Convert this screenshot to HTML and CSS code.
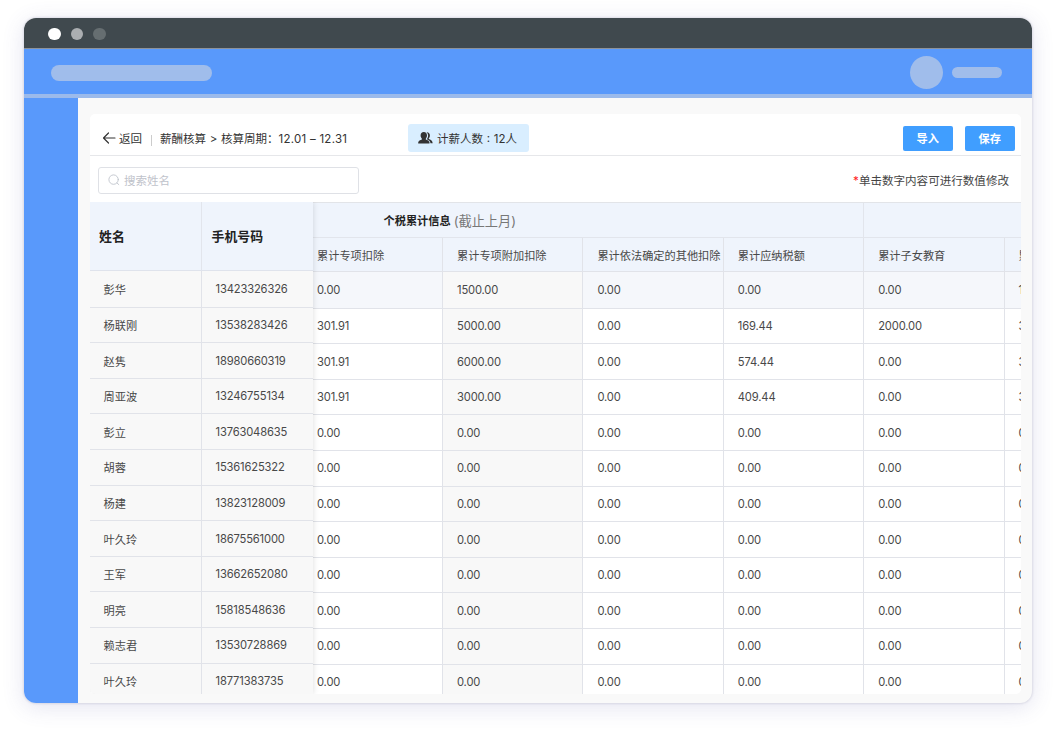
FILE: index.html
```html
<!DOCTYPE html>
<html lang="zh-CN">
<head>
    <meta charset="UTF-8">
    <meta name="viewport" content="width=device-width, initial-scale=1.0">
    <title>薪酬核算</title>
    <link rel="stylesheet" href="styles.css">
</head>
<body>
    <div class="window">
        <div class="titlebar">
            <span class="dot"></span>
            <span class="dot dot-mid"></span>
            <span class="dot dot-dim"></span>
        </div>
        <div class="topbar">
            <span class="logo-bar"></span>
            <span class="avatar"></span>
            <span class="user-bar"></span>
        </div>
        <div class="main">
            <div class="sidebar"></div>
            <div class="content">
                <div class="card">
                    <div class="card-head">
                        <svg class="back-icon" viewBox="0 0 14 12" fill="none" stroke="#333" stroke-width="1.2" stroke-linecap="round" stroke-linejoin="round"><path d="M13 6H1.500M6.500 1L1.500 6l5 5"/></svg>
                        <span class="back">返回</span>
                        <span class="divider"></span>
                        <span class="crumb">薪酬核算 <span class="arrow">&gt;</span> 核算周期：<span class="period">12.01 – 12.31</span></span>
                        <div class="count">
                            <svg class="people-icon" viewBox="0 0 15 12" fill="#333"><path d="M5.800 0C7.900 0 9 1.500 9 3.500c0 1.400-.6 2.500-1.200 3.200v.8c1.500.6 3.700 1.200 3.700 3.100V11.500H.2v-.9c0-1.900 2.200-2.500 3.700-3.100v-.8C3.200 6 2.600 4.900 2.600 3.500 2.600 1.500 3.700 0 5.800 0z"/><path d="M8.800.2c2 0 3.100 1.300 3.100 3.200 0 1.200-.5 2.200-1.100 2.900v.8c1.600.6 3.700 1.600 3.900 4.200h-2.200c-.2-2.200-1.800-3-3.400-3.700V6.800c.6-.8 1-1.800 1-3.200C10.100 2.200 9.600 1 8.500.2z"/></svg>
                            <span>计薪人数 : 12人</span>
                        </div>
                        <button class="btn btn-import">导入</button>
                        <button class="btn">保存</button>
                    </div>
                    <div class="toolbar">
                        <div class="search">
                            <svg class="search-icon" viewBox="0 0 12 12" fill="none" stroke="#c0c4cc" stroke-width="0.9" stroke-linecap="round"><circle cx="5.600" cy="5.600" r="4.700"/><path d="M9 9l1.800 1.600"/></svg>
                            <span>搜索姓名</span>
                        </div>
                        <div class="tip"><span class="star">*</span>单击数字内容可进行数值修改</div>
                    </div>
                    <div class="table">
                        <div class="fixed">
                            <div class="fixed-head"><div>姓名</div><div>手机号码</div></div>
                            <div class="row first"><div>彭华</div><div class="num">13423326326</div></div>
                            <div class="row"><div>杨联刚</div><div class="num">13538283426</div></div>
                            <div class="row"><div>赵隽</div><div class="num">18980660319</div></div>
                            <div class="row"><div>周亚波</div><div class="num">13246755134</div></div>
                            <div class="row"><div>彭立</div><div class="num">13763048635</div></div>
                            <div class="row"><div>胡蓉</div><div class="num">15361625322</div></div>
                            <div class="row"><div>杨建</div><div class="num">13823128009</div></div>
                            <div class="row"><div>叶久玲</div><div class="num">18675561000</div></div>
                            <div class="row"><div>王军</div><div class="num">13662652080</div></div>
                            <div class="row"><div>明亮</div><div class="num">15818548636</div></div>
                            <div class="row"><div>赖志君</div><div class="num">13530728869</div></div>
                            <div class="row"><div>叶久玲</div><div class="num">18771383735</div></div>
                        </div>
                        <div class="scroll">
                            <div class="group-head">
                                <div class="group"><b>个税累计信息</b> <span class="until">(截止上月)</span></div>
                            </div>
                            <div class="row sub-head"><div>累计专项扣除</div><div>累计专项附加扣除</div><div>累计依法确定的其他扣除</div><div>累计应纳税额</div><div>累计子女教育</div><div>累</div></div>
                            <div class="row num first"><div>0.00</div><div>1500.00</div><div>0.00</div><div>0.00</div><div>0.00</div><div>1</div></div>
                            <div class="row num"><div>301.91</div><div>5000.00</div><div>0.00</div><div>169.44</div><div>2000.00</div><div>3</div></div>
                            <div class="row num"><div>301.91</div><div>6000.00</div><div>0.00</div><div>574.44</div><div>0.00</div><div>3</div></div>
                            <div class="row num"><div>301.91</div><div>3000.00</div><div>0.00</div><div>409.44</div><div>0.00</div><div>3</div></div>
                            <div class="row num"><div>0.00</div><div>0.00</div><div>0.00</div><div>0.00</div><div>0.00</div><div>0</div></div>
                            <div class="row num"><div>0.00</div><div>0.00</div><div>0.00</div><div>0.00</div><div>0.00</div><div>0</div></div>
                            <div class="row num"><div>0.00</div><div>0.00</div><div>0.00</div><div>0.00</div><div>0.00</div><div>0</div></div>
                            <div class="row num"><div>0.00</div><div>0.00</div><div>0.00</div><div>0.00</div><div>0.00</div><div>0</div></div>
                            <div class="row num"><div>0.00</div><div>0.00</div><div>0.00</div><div>0.00</div><div>0.00</div><div>0</div></div>
                            <div class="row num"><div>0.00</div><div>0.00</div><div>0.00</div><div>0.00</div><div>0.00</div><div>0</div></div>
                            <div class="row num"><div>0.00</div><div>0.00</div><div>0.00</div><div>0.00</div><div>0.00</div><div>0</div></div>
                            <div class="row num"><div>0.00</div><div>0.00</div><div>0.00</div><div>0.00</div><div>0.00</div><div>0</div></div>
                        </div>
                    </div>
                </div>
            </div>
        </div>
    </div>
</body>
</html>
```

FILE: styles.css
```css
* {
    box-sizing: border-box;
}

body {
    margin: 0;
    padding: 18px 24px;
    height: 732px;
    overflow: hidden;
    background-color: #fff;
    font-family: "Inter", "Noto Sans CJK SC", sans-serif;
    font-size: 11.2px;
    color: #484848;
}

.window {
    display: flex;
    flex-direction: column;
    height: 685px;
    border-radius: 12px;
    overflow: hidden;
    background-color: #f9f9f9;
    box-shadow: 0 0 2px 1px rgba(60, 60, 110, 0.12), 0 4px 22px rgba(80, 80, 160, 0.16);
}

/* window chrome */
.titlebar {
    display: flex;
    align-items: center;
    gap: 10px;
    height: 31px;
    padding: 2px 0 0 24px;
    background-color: #40494e;
    border-bottom: 1px solid #8d9299;
}

.dot {
    width: 12.5px;
    height: 12.5px;
    border-radius: 50%;
    background-color: #fff;
}

.dot-mid {
    background-color: #abaeb1;
}

.dot-dim {
    background-color: #666e71;
}

.topbar {
    display: flex;
    align-items: center;
    height: 49px;
    padding: 0 30px 0 27px;
    background-color: #5999fb;
    border-bottom: 4px solid #9bbaeb;
}

.logo-bar {
    width: 161px;
    height: 16px;
    margin-top: 3px;
    border-radius: 8px;
    background-color: #a0bdeb;
}

.avatar {
    width: 33px;
    height: 33px;
    margin: 1px 9px 0 auto;
    border-radius: 50%;
    background-color: #a0bdeb;
}

.user-bar {
    width: 50px;
    height: 11px;
    margin-top: 1px;
    border-radius: 6px;
    background-color: #a0bdeb;
}

.main {
    display: flex;
    flex: 1;
    min-height: 0;
}

.sidebar {
    width: 54px;
    background-color: #5999fb;
}

.content {
    flex: 1;
    min-width: 0;
    padding: 16px 11px 9px 12px;
}

.card {
    display: flex;
    flex-direction: column;
    height: 580px;
    border-radius: 5px;
    overflow: hidden;
    background-color: #fff;
}

/* card header */
.card-head {
    display: flex;
    align-items: center;
    height: 42px;
    padding: 7px 6.5px 0 12px;
    border-bottom: 1px solid #e6e7ea;
    color: #333;
    white-space: nowrap;
}

.back-icon {
    width: 14px;
    height: 12px;
    margin-right: 3px;
}

.back {
    width: 32px;
    font-size: 11.5px;
}

.divider {
    width: 1px;
    height: 11px;
    margin: 5px 8px 0 0;
    background-color: #ccc;
}

.crumb {
    width: 248px;
    font-size: 11.5px;
}

.arrow {
    margin: 0 0.5px;
}

.period {
    letter-spacing: 0.25px;
}

.count {
    display: flex;
    align-items: center;
    width: 121px;
    height: 28px;
    padding-left: 10px;
    border-radius: 3px;
    background-color: #d9eeff;
    font-size: 11.5px;
    word-spacing: 0.5px;
}

.people-icon {
    width: 15px;
    height: 12px;
    margin-right: 4px;
}

.btn {
    width: 49.5px;
    height: 25px;
    padding: 0;
    border: 0;
    border-radius: 2px;
    background-color: #409eff;
    color: #fff;
    font-family: inherit;
    font-size: 11.2px;
    font-weight: 700;
}

.btn-import {
    margin: 0 12.5px 0 auto;
}

.toolbar {
    display: flex;
    align-items: center;
    justify-content: space-between;
    height: 46px;
    padding: 3px 12px 0 8px;
}

.search {
    display: flex;
    align-items: center;
    width: 261px;
    height: 27px;
    padding: 0 0 1px 9px;
    border: 1px solid #dfe1e6;
    border-radius: 3px;
    color: #bfc3cb;
    font-size: 11.5px;
}

.search-icon {
    width: 12px;
    height: 12px;
    margin-right: 4px;
}

.tip {
    padding-bottom: 2px;
    font-size: 11.55px;
    color: #444;
}

.star {
    color: #f22;
}

/* salary table */
.table {
    display: flex;
    flex: 1;
    min-height: 0;
    overflow: hidden;
}

.fixed {
    z-index: 1;
    flex: none;
    width: 223px;
    background-color: #f8f8f8;
    box-shadow: 0 0 6px rgba(0, 0, 0, 0.14);
}

.fixed-head {
    display: grid;
    grid-template-columns: 111.5px 111.5px;
    height: 69.4px;
    background-color: #eff4fc;
    border-bottom: 1px solid #dfe3ec;
    color: #222;
    font-size: 12.9px;
    font-weight: 700;
}

.fixed-head div {
    display: flex;
    align-items: center;
    padding: 0 0 2px 9px;
    border-right: 1px solid #e2e5ec;
}

.fixed-head div:last-child {
    padding-left: 10px;
}

.row {
    display: grid;
    grid-template-columns: 111.5px 111.5px;
    height: 35.6px;
    border-bottom: 1px solid #e1e3e9;
}

.row div {
    display: flex;
    align-items: center;
    padding-left: 14px;
    border-right: 1px solid #e1e3e9;
    white-space: nowrap;
}

.fixed .row div {
    padding-left: 13.5px;
}

.fixed .row .num {
    padding-left: 14px;
}

.fixed-head div:last-child,
.fixed .row div:last-child {
    border-right: 0;
}

.num {
    letter-spacing: -0.15px;
}

.row.first {
    height: 36.3px;
}

.scroll {
    flex: 1;
    min-width: 0;
    overflow: hidden;
    border-top: 1px solid #e2e4e8;
}

.scroll .row {
    grid-template-columns: 130px 140.4px 140.4px 140.4px 140.4px 140.4px;
    width: 832px;
}

.scroll .row div:first-child {
    padding-left: 4px;
}

.scroll .row div:nth-child(2) {
    background-color: #f8f8f8;
}

.group-head {
    display: flex;
    height: 35px;
    background-color: #eff4fc;
    border-bottom: 1px solid #e2e5ec;
}

.group {
    display: flex;
    align-items: center;
    gap: 3px;
    width: 551px;
    padding-left: 70.5px;
    border-right: 1px solid #e2e5ec;
}

.group b {
    color: #222;
}

.until {
    font-size: 13.2px;
    color: #777;
}

.scroll .sub-head {
    height: 34.4px;
    background-color: #eff4fc;
}

.scroll .sub-head div:nth-child(2) {
    background-color: #eff4fc;
}

.scroll .first {
    background-color: #f5f7fb;
}
```
